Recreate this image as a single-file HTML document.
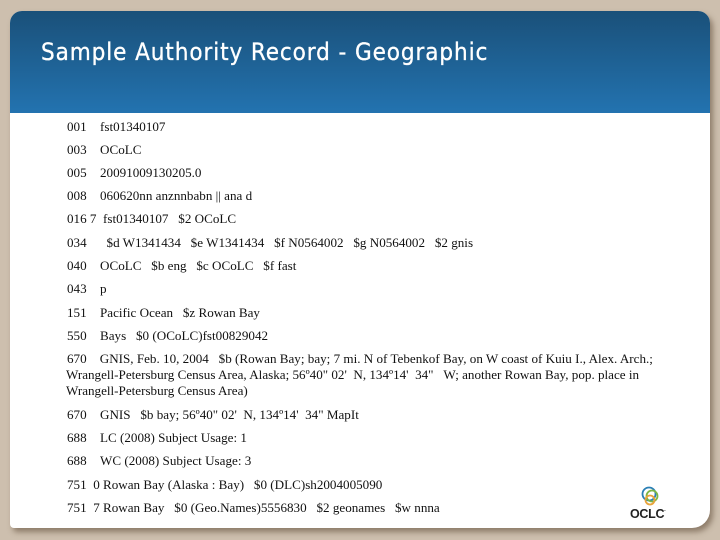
<!DOCTYPE html>
<html><head><meta charset="utf-8"><style>
html,body{margin:0;padding:0;width:720px;height:540px;overflow:hidden;background:#cdbfae;}
.card{position:absolute;left:10px;top:11px;width:700px;height:517px;background:#fff;border-radius:12px 12px 18px 4px;box-shadow:3px 4px 6px rgba(90,70,50,.55);overflow:hidden;}
.hdr{position:absolute;left:0;top:0;width:700px;height:102px;background:linear-gradient(#1a5079,#2373b0);}
.title{position:absolute;left:31px;top:27px;color:#fff;font:24px "DejaVu Sans Condensed","DejaVu Sans","Liberation Sans",sans-serif;letter-spacing:0.9px;-webkit-text-stroke:0.3px #fff;}
.l{position:absolute;font:13.1px "Liberation Serif",serif;color:#111;white-space:nowrap;}
.t{position:absolute;left:67px;}
.c{position:absolute;left:100px;}
</style></head><body>
<div class="card"><div class="hdr"><div class="title">Sample Authority Record - Geographic</div></div></div>
<div class="l" style="top:119px"><span class="t">001</span><span class="c">fst01340107</span></div>
<div class="l" style="top:142px"><span class="t">003</span><span class="c">OCoLC</span></div>
<div class="l" style="top:165px"><span class="t">005</span><span class="c">20091009130205.0</span></div>
<div class="l" style="top:188px"><span class="t">008</span><span class="c">060620nn anznnbabn || ana d</span></div>
<div class="l" style="top:211px"><span class="t">016 7 &nbsp;fst01340107 &nbsp;&nbsp;$2 OCoLC</span></div>
<div class="l" style="top:235px"><span class="t">034</span><span class="c">&nbsp;&nbsp;$d W1341434 &nbsp;&nbsp;$e W1341434 &nbsp;&nbsp;$f N0564002 &nbsp;&nbsp;$g N0564002 &nbsp;&nbsp;$2 gnis</span></div>
<div class="l" style="top:258px"><span class="t">040</span><span class="c">OCoLC &nbsp;&nbsp;$b eng &nbsp;&nbsp;$c OCoLC &nbsp;&nbsp;$f fast</span></div>
<div class="l" style="top:281px"><span class="t">043</span><span class="c">p</span></div>
<div class="l" style="top:305px"><span class="t">151</span><span class="c">Pacific Ocean &nbsp;&nbsp;$z Rowan Bay</span></div>
<div class="l" style="top:328px"><span class="t">550</span><span class="c">Bays &nbsp;&nbsp;$0 (OCoLC)fst00829042</span></div>
<div class="l" style="top:351px;left:67px">670 &nbsp;&nbsp;&nbsp;GNIS, Feb. 10, 2004 &nbsp;&nbsp;$b (Rowan Bay; bay; 7 mi. N of Tebenkof Bay, on W coast of Kuiu I., Alex. Arch.;</div>
<div class="l" style="top:367px;left:66px">Wrangell-Petersburg Census Area, Alaska; 56º40" 02' &nbsp;N, 134º14' &nbsp;34" &nbsp;&nbsp;W; another Rowan Bay, pop. place in</div>
<div class="l" style="top:383px;left:66px">Wrangell-Petersburg Census Area)</div>
<div class="l" style="top:407px"><span class="t">670</span><span class="c">GNIS &nbsp;&nbsp;$b bay; 56º40" 02' &nbsp;N, 134º14' &nbsp;34" MapIt</span></div>
<div class="l" style="top:430px"><span class="t">688</span><span class="c">LC (2008) Subject Usage: 1</span></div>
<div class="l" style="top:453px"><span class="t">688</span><span class="c">WC (2008) Subject Usage: 3</span></div>
<div class="l" style="top:477px"><span class="t">751 &nbsp;0 Rowan Bay (Alaska : Bay) &nbsp;&nbsp;$0 (DLC)sh2004005090</span></div>
<div class="l" style="top:500px"><span class="t">751 &nbsp;7 Rowan Bay &nbsp;&nbsp;$0 (Geo.Names)5556830 &nbsp;&nbsp;$2 geonames &nbsp;&nbsp;$w nnna</span></div>
<svg style="position:absolute;left:636px;top:484px" width="30" height="24" viewBox="0 0 30 24">
<circle cx="13" cy="10" r="6.5" fill="none" stroke="#2a7fb5" stroke-width="1.8"/>
<circle cx="16" cy="12" r="5.5" fill="none" stroke="#7db645" stroke-width="1.8"/>
<circle cx="14" cy="16" r="4.5" fill="none" stroke="#e9a33a" stroke-width="1.8"/>
</svg>
<div style="position:absolute;left:630px;top:507px;font:bold 12.5px 'Liberation Sans',sans-serif;color:#222;letter-spacing:-0.3px">OCLC<span style="font-size:5px;vertical-align:top">.</span></div>
</body></html>
